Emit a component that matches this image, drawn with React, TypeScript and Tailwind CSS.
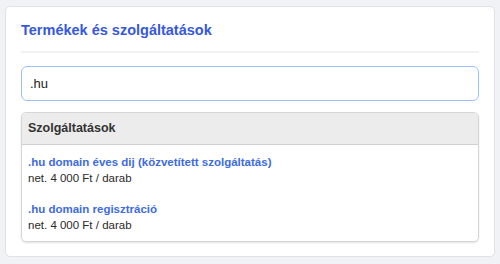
export default function App() {
  const items = [
    { name: ".hu domain éves dij (közvetített szolgáltatás)", price: "net. 4 000 Ft / darab" },
    { name: ".hu domain regisztráció", price: "net. 4 000 Ft / darab" },
  ];

  return (
    <div className="h-[264px] w-[500px] bg-[#f0f2f5] px-[5px] pt-[6px] font-['Liberation_Sans',Arial,sans-serif]">
      <div className="h-[251px] rounded-[5px] border border-[#dfe2e6] bg-white px-[15px]">
        <h2 className="border-b-2 border-[#f2f2f2] pb-[12px] pt-[15px] text-[14.5px] font-bold leading-[17px] text-[#3558dc]">
          Termékek és szolgáltatások
        </h2>
        <div className="mt-[13px] flex h-[35px] items-center rounded-[6px] border border-[#9dc0fb] px-[8px] text-[13px] text-[#222]">
          .hu
        </div>
        <div className="mt-[11px] overflow-hidden rounded-[5px] border border-[#d6d6d6] shadow-[0_1px_2px_rgba(0,0,0,0.12)]">
          <div className="flex h-[32px] items-center border-b border-[#cfcfcf] bg-[#ececec] px-[6px] text-[12.5px] font-bold text-[#333]">
            Szolgáltatások
          </div>
          {items.map((it, i) => (
            <div key={it.name} className={`px-[6px] text-[11.5px] leading-[16px] ${i === 0 ? "pb-[7px] pt-[9px]" : "pb-[8px] pt-[8px]"}`}>
              <div className="font-bold text-[#3d6be0]">{it.name}</div>
              <div className="text-[#2a2a2a]">{it.price}</div>
            </div>
          ))}
        </div>
      </div>
    </div>
  );
}
